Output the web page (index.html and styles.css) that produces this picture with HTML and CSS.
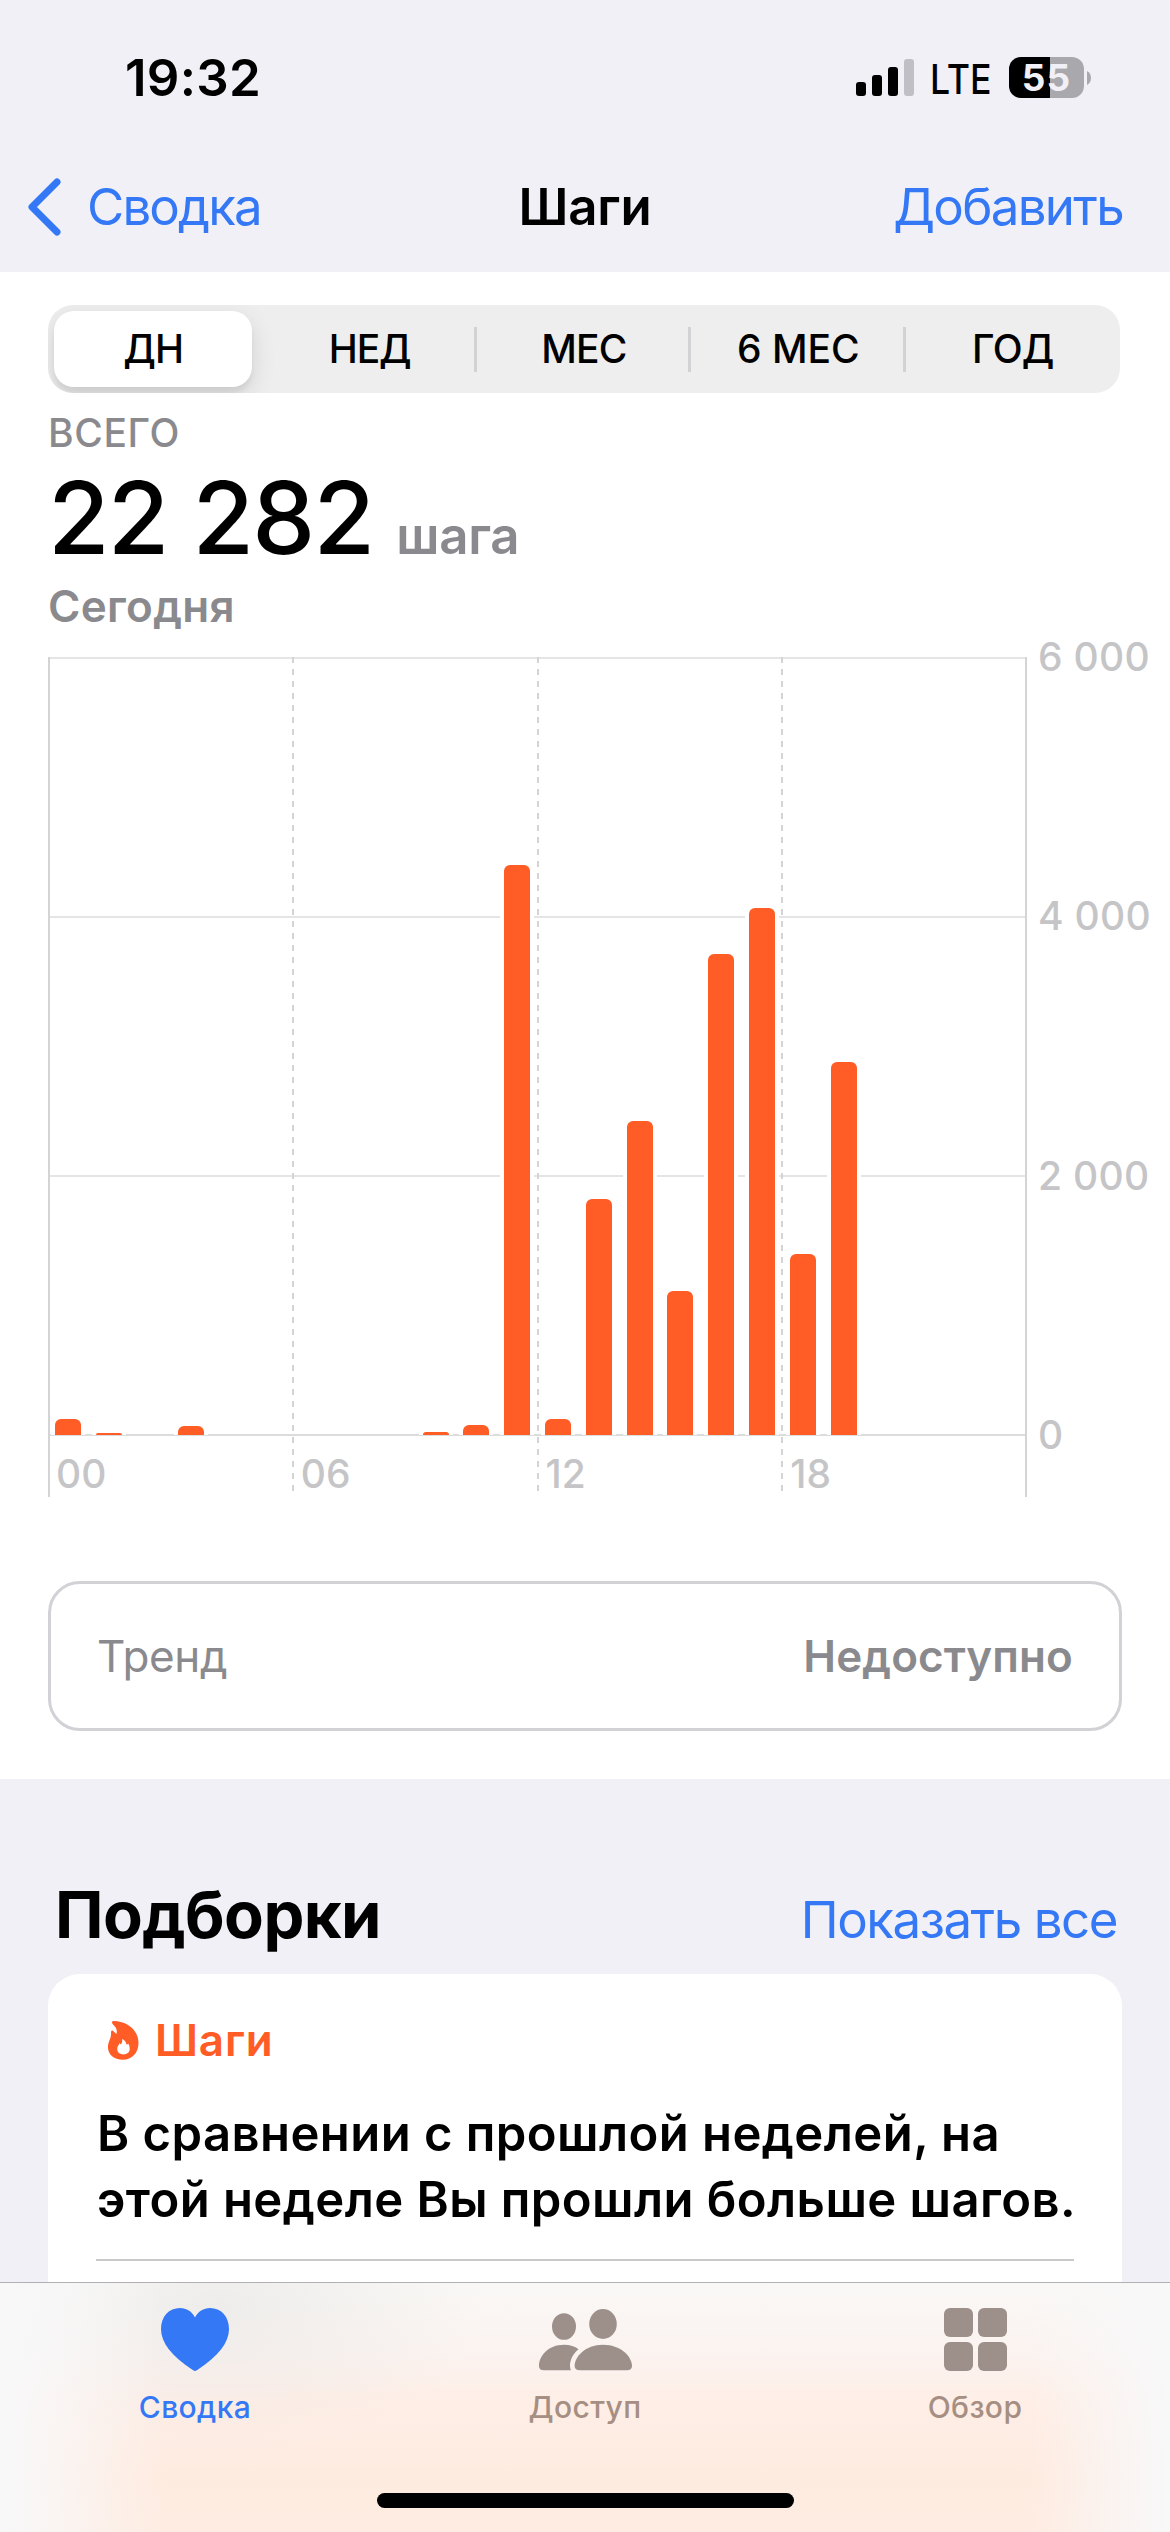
FILE: index.html
```
<!DOCTYPE html>
<html lang="ru">
<head>
  <meta charset="UTF-8">
  <meta name="viewport" content="width=device-width, initial-scale=1.0">
  <title>Шаги</title>
  <link rel="stylesheet" href="styles.css">
</head>
<body>
  <div class="status-bar">
    <div class="time">19:32</div>
    <div class="status-icons">
      <svg class="signal" width="58" height="37" viewBox="0 0 58 37">
        <rect x="0" y="23" width="10" height="14" rx="3"/>
        <rect x="16" y="16" width="10" height="21" rx="3"/>
        <rect x="32" y="8" width="10" height="29" rx="3"/>
        <rect class="weak" x="48" y="0" width="10" height="37" rx="3"/>
      </svg>
      <div class="network"><span>LTE</span></div>
      <div class="battery"><span>55</span></div>
      <svg class="battery-cap" width="4" height="14" viewBox="0 0 4 14">
        <path d="M0 0C2.6 1.2 4 4 4 7C4 10 2.6 12.8 0 14Z"/>
      </svg>
    </div>
  </div>

  <header class="nav-bar">
    <a href="#" class="back">
      <svg width="35" height="58" viewBox="0 0 35 58">
        <path d="M30 4L5 29L30 54"/>
      </svg>
      <span>Сводка</span>
    </a>
    <h1>Шаги</h1>
    <a href="#" class="add">Добавить</a>
  </header>

  <main>
    <section class="summary">
      <div class="segmented">
        <button class="active">ДН</button>
        <button>НЕД</button>
        <button>МЕС</button>
        <button>6 МЕС</button>
        <button>ГОД</button>
      </div>

      <div class="label">ВСЕГО</div>
      <div class="total">22 282 <span>шага</span></div>
      <div class="period">Сегодня</div>

      <div class="chart">
        <div class="plot">
          <div class="h-lines"><i></i><i></i><i></i><i></i></div>
          <div class="v-lines"><i></i><i></i><i></i><i></i></div>
          <div class="bars" id="bars"></div>
          <div class="x-axis">
            <span>00</span>
            <span>06</span>
            <span>12</span>
            <span>18</span>
          </div>
        </div>
        <div class="y-axis">
          <span>6 000</span>
          <span>4 000</span>
          <span>2 000</span>
          <span>0</span>
        </div>
      </div>

      <div class="trend">
        <span>Тренд</span>
        <strong>Недоступно</strong>
      </div>
    </section>

    <section class="highlights">
      <div class="section-head">
        <h2>Подборки</h2>
        <a href="#">Показать все</a>
      </div>
      <div class="card">
        <div class="card-title">
          <svg width="31" height="39" viewBox="0 0 31 39">
            <path fill-rule="evenodd" d="M5.5 0C19 0 30.5 9 30.5 22C30.5 32 24 38.7 14.8 38.7C6 38.7 0 33.5 0 26.5C0 20 3.6 17.5 3 11.5C2.8 9.6 4.5 9 5.6 10.2C6.6 11.5 7.4 12.3 8.4 13C9.6 8.5 7.8 6 4.8 3.2C3.4 1.8 4 0 5.5 0ZM14.2 18C14.4 21.5 13.9 23 12.6 23.2C11.9 23.2 11.6 22.6 11.4 21.8C11.4 24 9.2 25 9.2 28C9.2 31.5 12 33.4 15.4 33.4C19 33.4 21.7 31.4 21.7 28C21.7 24.5 20.8 23.5 20 22.5C19.6 23.8 18.8 24 18.4 23C17.8 21 17 19.4 14.2 18Z"/>
          </svg>
          <span>Шаги</span>
        </div>
        <p>В сравнении с прошлой неделей, на этой неделе Вы прошли больше шагов.</p>
        <hr>
      </div>
    </section>
  </main>

  <nav class="tab-bar">
    <a href="#" class="tab active">
      <svg width="68" height="63" viewBox="0 0 68 63">
        <path d="M34 63C33 63 32 62.3 31 61.6C11 48 0 35 0 21C0 8.5 8 0 19 0C25.5 0 31 3.5 34 9.5C37 3.5 42.5 0 49 0C60 0 68 8.5 68 21C68 35 57 48 37 61.6C36 62.3 35 63 34 63Z"/>
      </svg>
      <span>Сводка</span>
    </a>
    <a href="#" class="tab">
      <svg width="93" height="63" viewBox="0 -1 93 63">
        <ellipse cx="25" cy="17.5" rx="12" ry="13.3"/>
        <ellipse cx="64" cy="15" rx="13.8" ry="15"/>
        <path d="M41 61.3C37.5 61.3 35.6 59.8 35.6 57C35.6 48 46 35.7 64 35.7C83 35.7 93 48.5 93 57C93 59.8 91 61.3 88 61.3Z"/>
        <path d="M5 61.3C1.5 61.3 0 59.8 0 57C0 47 9 35.7 25 35.7C31 35.7 36 37.3 39.5 40.3C32.5 46 29.5 54 31.8 61.3Z"/>
      </svg>
      <span>Доступ</span>
    </a>
    <a href="#" class="tab">
      <svg width="63" height="63" viewBox="0 0 63 63">
        <rect x="0" y="0" width="29" height="29" rx="6"/>
        <rect x="34" y="0" width="29" height="29" rx="6"/>
        <rect x="0" y="34" width="29" height="29" rx="6"/>
        <rect x="34" y="34" width="29" height="29" rx="6"/>
      </svg>
      <span>Обзор</span>
    </a>
    <div class="home-indicator"></div>
  </nav>

  <script>
    // steps per hour, 0 to 23
    const steps = [120, 18, 0, 70, 0, 0, 0, 0, 0, 25, 78, 4396, 124, 1820, 2421, 1112, 3712, 4066, 1396, 2878, 0, 0, 0, 0];
    const max = 6000;
    const bars = document.getElementById('bars');

    steps.forEach((value) => {
      const height = (value / max * 100).toFixed(2);
      bars.innerHTML += value
        ? `<div class="hour"><div class="bar" style="height: ${height}%"></div></div>`
        : '<div class="hour"></div>';
    });
  </script>
</body>
</html>
```
FILE: styles.css
```
* {
  box-sizing: border-box;
}
body {
  margin: 0;
  position: relative;
  width: 1170px;
  height: 2532px;
  overflow: hidden;
  background: #f1f0f6;
  color: #000;
  font-family: Inter, "Noto Sans", sans-serif;
}
a {
  color: #3478f6;
  text-decoration: none;
}
h1, h2, p {
  margin: 0;
}
svg {
  display: block;
}

/* status bar */
.status-bar {
  display: flex;
  justify-content: space-between;
  height: 158px;
  padding: 57px 79px 0 125px;
}
.time {
  font-size: 51px;
  font-weight: 600;
  line-height: 42px;
  letter-spacing: 0.3px;
}
.status-icons {
  display: flex;
  align-items: flex-start;
}
.signal {
  margin-top: 2px;
}
.signal .weak {
  fill: #c0bfc5;
}
.network {
  width: 94px;
  padding-left: 16px;
  font-size: 41px;
  font-weight: 500;
  line-height: 44px;
}
.network span {
  display: inline-block;
  transform: scaleX(0.87);
  transform-origin: left;
}
.battery {
  width: 75px;
  height: 41px;
  margin-left: 1px;
  border-radius: 12px;
  background: linear-gradient(to right, #000 41px, #a9a8ad 41px);
  color: #f1f0f6;
  font-size: 37px;
  font-weight: 700;
  line-height: 41px;
  letter-spacing: 1px;
  text-align: center;
}
.battery-cap {
  margin: 14px 0 0 3px;
  fill: #a9a8ad;
}

/* navigation */
.nav-bar {
  display: grid;
  grid-template-columns: 1fr auto 1fr;
  align-items: center;
  height: 114px;
  padding: 0 27px 16px;
  font-size: 51px;
  line-height: 60px;
}
.back {
  display: flex;
  align-items: center;
  gap: 25px;
  letter-spacing: -1.86px;
}
.back path {
  fill: none;
  stroke: #3478f6;
  stroke-width: 7;
  stroke-linecap: round;
  stroke-linejoin: round;
}
.nav-bar h1 {
  font-size: 51px;
  font-weight: 600;
  letter-spacing: -0.2px;
}
.add {
  padding-right: 20px;
  text-align: right;
  letter-spacing: -1.68px;
}

/* summary */
.summary {
  padding: 33px 0 48px 48px;
  background: #fff;
}
.segmented {
  display: grid;
  grid-template-columns: repeat(5, 1fr);
  width: 1072px;
  height: 88px;
  padding: 6px 0;
  overflow: hidden;
  border-radius: 25px;
  background: #eee;
}
.segmented button {
  padding: 0;
  border: 0;
  background: linear-gradient(#d2d2d5, #d2d2d5) no-repeat right center / 3px 45px;
  font-family: inherit;
  font-size: 39px;
  font-weight: 500;
  line-height: 76px;
  letter-spacing: -0.8px;
}
.segmented button:nth-child(2) {
  letter-spacing: -1.2px;
}
.segmented button:nth-child(4) {
  letter-spacing: 0;
}
.segmented button:last-child {
  background: none;
}
.segmented .active {
  margin: 0 10px 0 6px;
  border-radius: 20px;
  background: #fff;
  box-shadow: 0 8px 24px rgba(0, 0, 0, 0.12), 0 6px 4px rgba(0, 0, 0, 0.05);
}
.label {
  margin-top: 10px;
  color: #8a8a8e;
  font-size: 39px;
  font-weight: 500;
  line-height: 60px;
  letter-spacing: 0.6px;
}
.total {
  display: flex;
  align-items: baseline;
  height: 109px;
  font-size: 100px;
  font-weight: 550;
  line-height: 109px;
  letter-spacing: -1.8px;
}
.total span {
  margin-left: 23px;
  color: #8a8a8e;
  font-size: 51px;
  font-weight: 600;
  letter-spacing: -0.3px;
}
.period {
  color: #8a8a8e;
  font-size: 44px;
  font-weight: 600;
  line-height: 68px;
  letter-spacing: 0.3px;
}

/* chart */
.chart {
  display: flex;
  height: 840px;
  margin-top: 17px;
  color: #c5c5c7;
  font-size: 39px;
  font-weight: 500;
}
.plot {
  position: relative;
  width: 979px;
}
.h-lines {
  position: absolute;
  inset: 0 0 61px 0;
  display: flex;
  flex-direction: column;
  justify-content: space-between;
}
.h-lines i {
  height: 2px;
  background: #e5e5e6;
}
.h-lines i:last-child {
  background: #dcdcdd;
}
.v-lines {
  position: absolute;
  inset: 0;
  display: grid;
  grid-template-columns: repeat(4, 1fr);
  border-right: 2px solid #d4d4d6;
}
.v-lines i {
  width: 2px;
  background: repeating-linear-gradient(#d4d4d6 0 6px, transparent 6px 12px);
}
.v-lines i:first-child {
  background: #d4d4d6;
}
.bars {
  position: relative;
  display: flex;
  height: 778px;
}
.hour {
  flex: 1;
  display: flex;
  align-items: flex-end;
  justify-content: center;
}
.bar {
  width: 26px;
  border-radius: 6px 6px 0 0;
  background: #ff5c26;
  box-shadow: -4px 0 #fff, 4px 0 #fff;
}
.x-axis {
  display: grid;
  grid-template-columns: repeat(4, 1fr);
  height: 62px;
  line-height: 78px;
}
.x-axis span {
  padding-left: 8px;
}
.y-axis {
  display: flex;
  flex-direction: column;
  justify-content: space-between;
  height: 838px;
  margin: -30px 0 0 11px;
  line-height: 60px;
  letter-spacing: 0.3px;
  white-space: nowrap;
}
.trend {
  display: flex;
  align-items: center;
  justify-content: space-between;
  width: 1074px;
  height: 150px;
  margin-top: 84px;
  padding: 0 46px;
  border: 3px solid #d1d1d6;
  border-radius: 32px;
  color: #8a8a8e;
  font-size: 44px;
  letter-spacing: -0.4px;
}
.trend strong {
  font-weight: 600;
  letter-spacing: 0.1px;
}

/* highlights */
.highlights {
  padding: 96px 48px 0;
}
.section-head {
  display: flex;
  align-items: baseline;
  justify-content: space-between;
  height: 80px;
  padding: 0 5px 0 7px;
  line-height: 80px;
}
.section-head h2 {
  font-size: 65px;
  font-weight: 700;
  letter-spacing: -0.6px;
}
.section-head a {
  font-size: 51px;
  letter-spacing: -1.45px;
}
.card {
  height: 600px;
  margin-top: 19px;
  padding: 36px 48px;
  border-radius: 32px;
  background: #fff;
}
.card-title {
  display: flex;
  align-items: center;
  gap: 16px;
  padding-left: 12px;
  color: #ff5c26;
  font-size: 44px;
  font-weight: 600;
  line-height: 60px;
  letter-spacing: 0.8px;
}
.card-title svg {
  fill: #ff5c26;
}
.card p {
  margin: 31px -10px 0 1px;
  font-size: 49px;
  font-weight: 600;
  line-height: 66px;
  letter-spacing: 0.43px;
}
.card hr {
  height: 2px;
  margin: 26px 0 0;
  border: 0;
  background: #c9c9cb;
}

/* tab bar */
.tab-bar {
  position: absolute;
  left: 0;
  right: 0;
  bottom: 0;
  display: grid;
  grid-template-columns: repeat(3, 1fr);
  height: 250px;
  padding-top: 25px;
  border-top: 1px solid #b1b0b4;
  background:
    linear-gradient(to right, #f8f8f9 0, rgba(248, 248, 249, 0.7) 5%, rgba(248, 248, 249, 0) 14%, rgba(248, 248, 249, 0) 88%, rgba(248, 248, 249, 0.7) 96%, #f8f8f9 100%),
    radial-gradient(ellipse 260px 150px at 220px 20px, rgba(229, 229, 227, 0.55), rgba(229, 229, 227, 0)),
    linear-gradient(#f9f8f6 0, #fbf3f0 28%, #feeee6 48%, #feebe0 78%, #feece2 100%);
}
.tab {
  display: flex;
  flex-direction: column;
  align-items: center;
  color: #a68f82;
  font-size: 30px;
  font-weight: 500;
  line-height: 40px;
  letter-spacing: 0.4px;
}
.tab svg {
  margin-bottom: 16px;
  fill: #9d908a;
}
.tab.active {
  color: #3478f6;
}
.tab.active svg {
  fill: #3478f6;
}
.home-indicator {
  position: absolute;
  left: 377px;
  bottom: 24px;
  width: 417px;
  height: 15px;
  border-radius: 8px;
  background: #000;
}
```
